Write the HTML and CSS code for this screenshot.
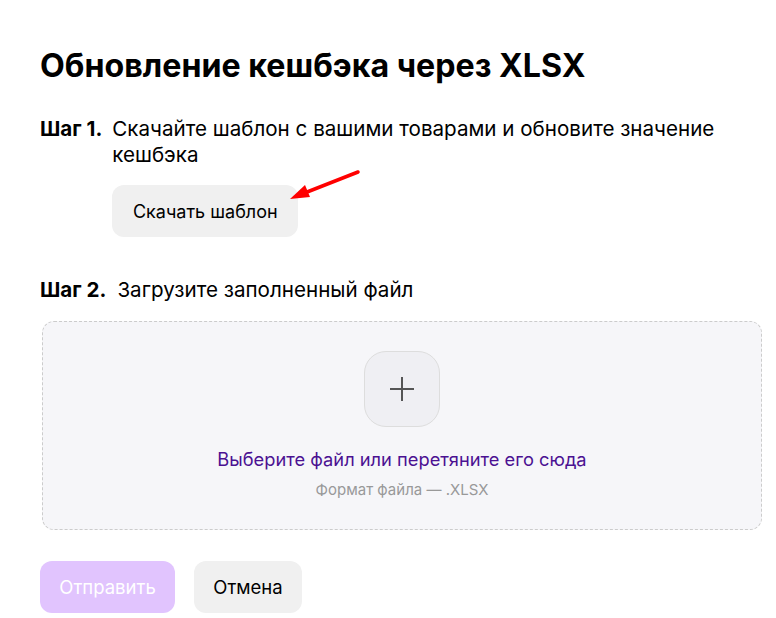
FILE: index.html
```html
<!DOCTYPE html>
<html lang="ru">

<head>
    <meta charset="UTF-8">
    <meta name="viewport" content="width=device-width, initial-scale=1.0">
    <title>Обновление кешбэка через XLSX</title>
    <link rel="stylesheet" href="styles.css">
</head>

<body>

    <div class="modal">
        <h1 class="title">Обновление кешбэка через XLSX</h1>

        <div class="step">
            <span class="step_num">Шаг 1.</span>
            <div class="step_body">
                <p class="step_text">Скачайте шаблон с вашими товарами и обновите значение кешбэка</p>
                <div class="download_wrap">
                    <button class="btn btn_gray download">Скачать шаблон</button>
                    <!-- pointer annotation -->
                    <svg class="arrow" width="80" height="40" viewBox="0 0 80 40">
                        <path d="M70 4 L14 26" stroke="#f00" stroke-width="3.5" stroke-linecap="round" fill="none" />
                        <path d="M2 31 L17 17 L22 29 Z" fill="#f00" />
                    </svg>
                </div>
            </div>
        </div>

        <div class="step step_two">
            <span class="step_num">Шаг 2.</span>
            <p class="step_text">Загрузите заполненный файл</p>
        </div>

        <div class="dropzone">
            <div class="plus_box">
                <svg width="26" height="26" viewBox="0 0 26 26">
                    <path d="M13 1 V25 M1 13 H25" stroke="#555" stroke-width="2" fill="none" />
                </svg>
            </div>
            <div class="drop_text">Выберите файл или перетяните его сюда</div>
            <div class="drop_hint">Формат файла — .XLSX</div>
        </div>

        <div class="actions">
            <button class="btn btn_purple" disabled>Отправить</button>
            <button class="btn btn_gray">Отмена</button>
        </div>
    </div>

</body>

</html>
```

FILE: styles.css
```css
body {
    font-family: Inter, "Noto Sans", sans-serif;
    margin: 0;
    padding: 0;
    background-color: #fff;
    color: #000;
}

.modal {
    padding: 46px 14px 0 40px;
}

.title {
    margin: 0;
    font-size: 32.2px;
    font-weight: 700;
    line-height: 40px;
}

.step {
    display: flex;
    align-items: flex-start;
    margin-top: 30px;
    font-size: 20.6px;
    line-height: 26px;
}

.step_num {
    font-weight: 700;
    margin-right: 10px;
    white-space: nowrap;
}

.step_body {
    flex: 1;
}

.step_text {
    margin: 0;
    max-width: 610px;
}

.download_wrap {
    position: relative;
    margin-top: 17px;
}

.arrow {
    position: absolute;
    left: 176px;
    top: -17px;
}

.btn {
    font-family: inherit;
    border: none;
    border-radius: 12px;
    font-size: 18.5px;
    height: 52px;
    padding: 0 18px;
    cursor: pointer;
}

.btn_gray {
    background-color: #f0f0f0;
    color: #000;
}

.download {
    font-size: 18px;
    width: 186px;
}

.step_two {
    margin-top: 40px;
}

.step_two .step_num {
    margin-right: 11px;
}

.dropzone {
    margin-top: 18px;
    height: 209px;
    box-sizing: border-box;
    border: 1px dashed #ccc;
    border-radius: 12px;
    background-color: #f6f6f9;
    display: flex;
    flex-direction: column;
    align-items: center;
    padding-top: 29px;
    margin-left: 2px;
}

.plus_box {
    width: 76px;
    height: 76px;
    box-sizing: border-box;
    border: 1px solid #ddd;
    border-radius: 22px;
    background-color: #efeff3;
    display: flex;
    justify-content: center;
    align-items: center;
}

.drop_text {
    margin-top: 21px;
    color: #4b1192;
    font-size: 18.3px;
    line-height: 22px;
}

.drop_hint {
    margin-top: 11px;
    color: #999;
    font-size: 15px;
    line-height: 18px;
}

.actions {
    display: flex;
    gap: 19px;
    margin-top: 31px;
}

.btn_purple {
    background-color: #e1c4fe;
    color: #fff;
    width: 135px;
}

.actions .btn_gray {
    width: 108px;
}
```
